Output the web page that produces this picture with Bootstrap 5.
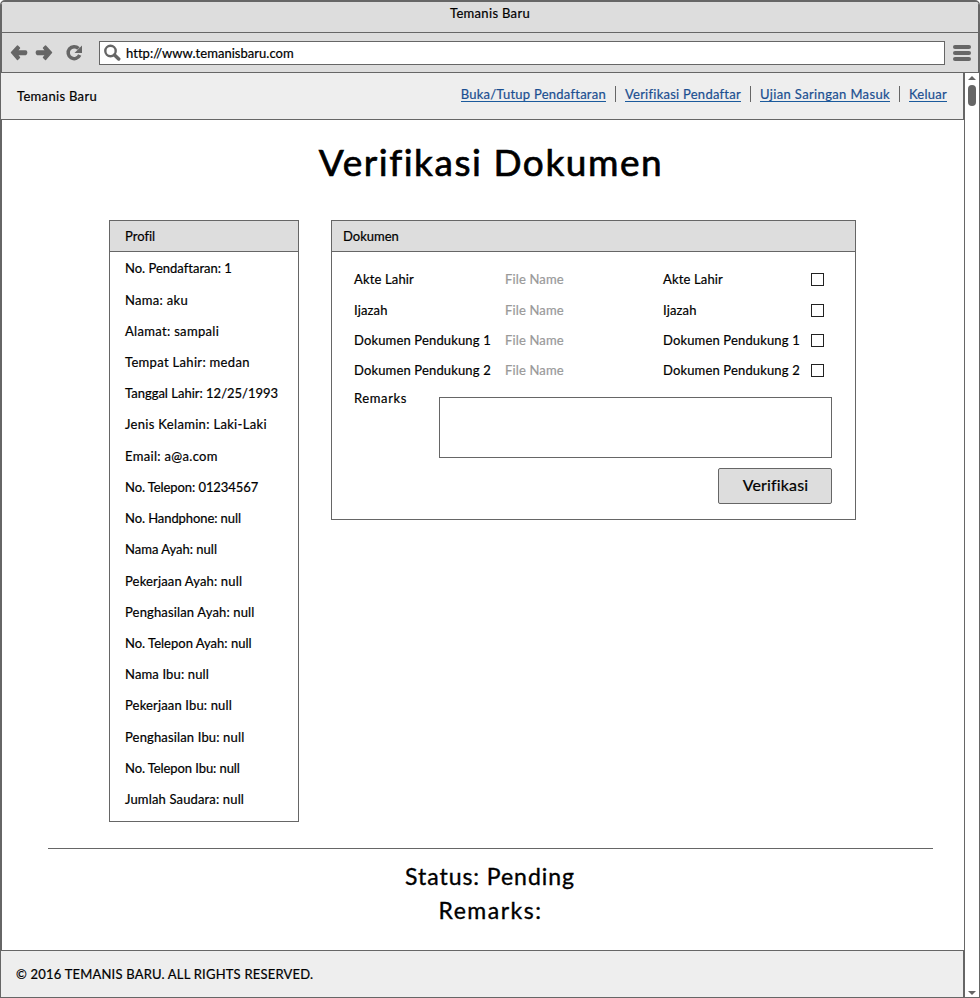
<!DOCTYPE html>
<html lang="id">
<head>
<meta charset="utf-8">
<meta name="viewport" content="width=device-width, initial-scale=1">
<title>Temanis Baru</title>
<link href="https://cdn.jsdelivr.net/npm/bootstrap@5.3.0/dist/css/bootstrap.min.css" rel="stylesheet">
<style>
  :root { --ink: #666; --chrome: #ddd; --band: #eee; }
  body { font-family: Lato, "Liberation Sans", sans-serif; font-size: 13px; line-height: 18px; letter-spacing: .32px; color: #000; -webkit-text-stroke: .2px; font-variant-ligatures: none; overflow: hidden; }
  .snug { letter-spacing: .15px; }
  .tight { letter-spacing: 0; }
  .tighter { letter-spacing: -.08px; }
  .browser { height: 998px; border: 1px solid var(--ink); border-top-width: 2px; border-radius: 5px 5px 0 0; overflow: hidden; }
  .title-bar { height: 31px; background: var(--chrome); border-bottom: 1px solid var(--ink); border-left: 1px solid var(--ink); border-right: 1px solid var(--ink); padding-top: 2px; }
  .tool-bar { height: 40px; background: var(--chrome); border-bottom: 1px solid var(--ink); border-left: 1px solid var(--ink); border-right: 1px solid var(--ink); padding: 0 6px 0 7px; }
  .address { height: 24px; background: #fff; border: 1px solid var(--ink); margin: 0 8px 0 14px; padding-left: 4px; }
  .url-text { letter-spacing: .03px; padding-left: 5px; }
  .page-pane { width: 964px; border-right: 1px solid var(--ink); }
  .site-head { height: 47px; background: var(--band); border-bottom: 1px solid var(--ink); border-right: 1px solid var(--ink); padding: 0 16px; }
  .site-foot { height: 47px; background: var(--band); border-top: 1px solid var(--ink); border-right: 1px solid var(--ink); padding: 0 16px 0 15px; letter-spacing: .2px; }
  .site-nav { letter-spacing: .25px; padding-bottom: 3px; }
  .site-nav a { color: #1b4f91; line-height: 14px; border-bottom: 1px solid #1b5a9c; text-decoration: none; }
  .site-nav a + a { margin-left: 19px; position: relative; }
  .site-nav a + a::before { content: ""; position: absolute; left: -10px; top: -1px; height: 16px; border-left: 1px solid var(--ink); }
  .site-nav .roomy { letter-spacing: .36px; }
  .page-body { border-left: 1px solid var(--ink); }
  .page-title { font-size: 37px; line-height: 44px; letter-spacing: 1.55px; margin: 20px 0 36px; padding-left: 16px; font-weight: 400; -webkit-text-stroke: .7px; }
  .panels { padding-left: 107px; gap: 32px; }
  .panel { border: 1px solid var(--ink); background: #fff; }
  .panel-head { height: 31px; background: var(--chrome); border-bottom: 1px solid var(--ink); }
  .profile { width: 190px; height: 602px; }
  .profile ul { padding-top: 1.4px; }
  .profile .panel-head, .profile li { padding-left: 15px; }
  .profile li { height: 31.22px; line-height: 31.22px; white-space: nowrap; }
  .docs { width: 525px; height: 300px; }
  .docs .panel-head { padding-left: 11px; }
  .doc-grid { display: grid; grid-template-columns: 151px 158px 148px 13px; grid-auto-rows: 30.4px; align-items: center; padding: 12px 0 0 22px; white-space: nowrap; }
  .file-name { color: #999; }
  .doc-grid input { appearance: none; width: 13px; height: 13px; margin: 1px 0 0; border: 1px solid #222; background: #fff; }
  .remarks-row { padding: 11px 23px 0 22px; }
  .remarks-row label { line-height: 3px; letter-spacing: .6px; }
  .remarks-row textarea { width: 393px; height: 61px; border: 1px solid var(--ink); resize: none; display: block; }
  .verify { width: 114px; height: 36px; border: 1px solid var(--ink); border-radius: 2px; background: var(--chrome); font-size: 16px; letter-spacing: .15px; line-height: 31px; padding: 0 0 2px 1px; color: #000; margin: 10px 23px 0 0; }
  .rule { width: 885px; margin: 26px 0 0 46px; border-top: 1px solid var(--ink); }
  .status { font-size: 23px; line-height: 34px; letter-spacing: .95px; padding: 10px 0 0 14px; -webkit-text-stroke: .35px; }
  .status-note { letter-spacing: 1.5px; padding-left: 1px; }
  .scroller { flex: 1; background: #fff; padding: 3px 0 2px; }
  .thumb { width: 8px; height: 21px; border-radius: 4px; background: var(--ink); margin-top: 5px; }
</style>
<script src="https://cdn.jsdelivr.net/npm/bootstrap@5.3.0/dist/js/bootstrap.bundle.min.js"></script>
</head>
<body>
<div class="browser d-flex flex-column">
  <div class="title-bar text-center">Temanis Baru</div>
  <div class="tool-bar d-flex align-items-center">
    <svg width="76" height="18" viewBox="0 0 76 18" fill="#666">
      <path d="M2.500 8.500 8.500 2l2 2L8 7h8.500q1.200 0 1.200 1.500T16.500 10.500H8l2.500 3-2 2z" stroke="#666" stroke-width="1.400" stroke-linejoin="round"/>
      <path d="M42.500 8.500 36.500 2l-2 2L37 7h-8.500q-1.200 0-1.200 1.500t1.200 2H37l-2.500 3 2 2z" stroke="#666" stroke-width="1.400" stroke-linejoin="round"/>
      <path d="M69.500 4.500A6 6 0 1 0 70.700 11" fill="none" stroke="#666" stroke-width="3.500"/>
      <path d="M73 1.500V9h-7.500z"/>
    </svg>
    <div class="address flex-grow-1 d-flex align-items-center">
      <svg width="17" height="18" viewBox="0 0 17 18" fill="none" stroke="#666"><circle cx="6.500" cy="7" r="5.200" stroke-width="2.400"/><path d="m10.500 11 4.200 4" stroke-width="3.500" stroke-linecap="round"/></svg>
      <span class="url-text">http://www.temanisbaru.com</span>
    </div>
    <svg width="19" height="18" viewBox="0 0 19 18" fill="#666"><rect x="0" y="1" width="18" height="4" rx="2"/><rect x="0" y="7" width="18" height="4" rx="2"/><rect x="0" y="13" width="18" height="4" rx="2"/></svg>
  </div>
  <div class="d-flex flex-grow-1">
    <div class="page-pane d-flex flex-column">
      <header class="site-head d-flex justify-content-between align-items-center">
        <span>Temanis Baru</span>
        <nav class="site-nav d-flex"><a href="#">Buka/Tutup Pendaftaran</a><a href="#">Verifikasi Pendaftar</a><a href="#" class="roomy">Ujian Saringan Masuk</a><a href="#">Keluar</a></nav>
      </header>
      <main class="page-body flex-grow-1">
        <h1 class="page-title text-center">Verifikasi Dokumen</h1>
        <div class="panels d-flex align-items-start">
          <section class="panel profile">
            <div class="panel-head d-flex align-items-center tight">Profil</div>
            <ul class="list-unstyled mb-0">
              <li class="tight">No. Pendaftaran: 1</li>
              <li>Nama: aku</li>
              <li>Alamat: sampali</li>
              <li>Tempat Lahir: medan</li>
              <li class="tight">Tanggal Lahir: 12/25/1993</li>
              <li>Jenis Kelamin: Laki-Laki</li>
              <li>Email: a@a.com</li>
              <li class="tighter">No. Telepon: 01234567</li>
              <li class="tighter">No. Handphone: null</li>
              <li class="tight">Nama Ayah: null</li>
              <li class="snug">Pekerjaan Ayah: null</li>
              <li class="snug">Penghasilan Ayah: null</li>
              <li class="tight">No. Telepon Ayah: null</li>
              <li class="snug">Nama Ibu: null</li>
              <li class="snug">Pekerjaan Ibu: null</li>
              <li class="snug">Penghasilan Ibu: null</li>
              <li class="tighter">No. Telepon Ibu: null</li>
              <li class="snug">Jumlah Saudara: null</li>
            </ul>
          </section>
          <section class="panel docs d-flex flex-column">
            <div class="panel-head d-flex align-items-center tight">Dokumen</div>
            <div class="doc-grid snug">
              <span>Akte Lahir</span><span class="file-name">File Name</span><span>Akte Lahir</span><input type="checkbox">
              <span>Ijazah</span><span class="file-name">File Name</span><span>Ijazah</span><input type="checkbox">
              <span>Dokumen Pendukung 1</span><span class="file-name">File Name</span><span>Dokumen Pendukung 1</span><input type="checkbox">
              <span>Dokumen Pendukung 2</span><span class="file-name">File Name</span><span>Dokumen Pendukung 2</span><input type="checkbox">
            </div>
            <div class="remarks-row d-flex justify-content-between align-items-start"><label for="remarks">Remarks</label><textarea id="remarks"></textarea></div>
            <button class="btn verify align-self-end" type="button">Verifikasi</button>
          </section>
        </div>
        <div class="rule"></div>
        <div class="status text-center"><div>Status: Pending</div><div class="status-note">Remarks:</div></div>
      </main>
      <footer class="site-foot d-flex align-items-center">© 2016 TEMANIS BARU. ALL RIGHTS RESERVED.</footer>
    </div>
    <div class="scroller d-flex flex-column align-items-center">
      <svg width="8" height="4" viewBox="0 0 8 4" fill="#666"><path d="M0 4 4 0l4 4z"/></svg>
      <div class="thumb"></div>
      <svg class="mt-auto" width="8" height="4" viewBox="0 0 8 4" fill="#666"><path d="M0 0h8L4 4z"/></svg>
    </div>
  </div>
</div>
</body>
</html>
